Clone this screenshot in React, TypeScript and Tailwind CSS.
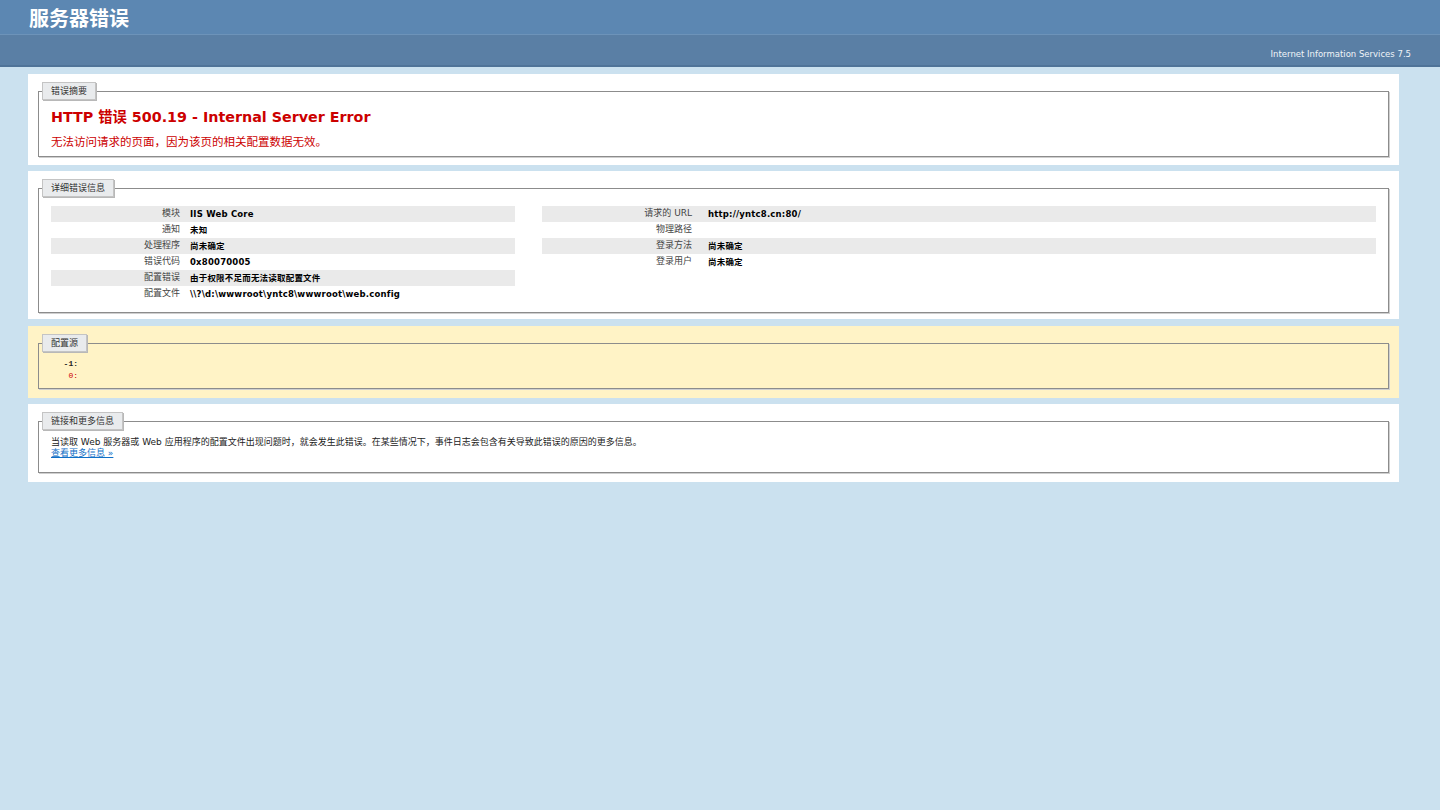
const FONT = '"DejaVu Sans", Verdana, "Noto Sans CJK SC", sans-serif';
const MONO = '"Liberation Mono", "DejaVu Sans Mono", monospace';

function Legend({ children }: { children: React.ReactNode }) {
  return (
    <legend className="ml-[2px] px-[8px] h-[18px] leading-[17px] text-[9px] text-[#333] bg-[#e9ebed] border border-[#c4c4c4] shadow-[1px_1px_0_#b8b8b8]">
      {children}
    </legend>
  );
}

function Box({
  title,
  children,
  className = "",
}: {
  title: string;
  children: React.ReactNode;
  className?: string;
}) {
  return (
    <fieldset
      className={`m-0 px-[1px] pt-0 min-w-0 border border-[#8c8c8c] shadow-[1px_1px_0_#cfcfcf] ${className}`}
    >
      <Legend>{title}</Legend>
      {children}
    </fieldset>
  );
}

const leftRows: [string, string][] = [
  ["模块", "IIS Web Core"],
  ["通知", "未知"],
  ["处理程序", "尚未确定"],
  ["错误代码", "0x80070005"],
  ["配置错误", "由于权限不足而无法读取配置文件"],
  ["配置文件", "\\\\?\\d:\\wwwroot\\yntc8\\wwwroot\\web.config"],
];

const rightRows: [string, string][] = [
  ["请求的 URL", "http://yntc8.cn:80/"],
  ["物理路径", ""],
  ["登录方法", "尚未确定"],
  ["登录用户", "尚未确定"],
];

function InfoTable({ rows, labelW }: { rows: [string, string][]; labelW: string }) {
  return (
    <div className="flex flex-col">
      {rows.map(([k, v], i) => (
        <div
          key={k}
          className={`flex h-[16px] items-center ${i % 2 === 0 ? "bg-[#eaeaea]" : ""}`}
        >
          <div className={`${labelW} shrink-0 text-right text-[9px] text-[#444]`}>{k}</div>
          <div className="text-[8.5px] font-bold text-black whitespace-nowrap tracking-[0.2px]">{v}</div>
        </div>
      ))}
    </div>
  );
}

export default function App() {
  return (
    <div className="min-h-screen bg-[#cbe1ef]" style={{ fontFamily: FONT }}>
      {/* Header */}
      <div className="h-[35px] bg-[#5c87b2] border-b border-[#6d93b9] flex items-center pl-[29px] pt-[3px]">
        <h1 className="text-white font-bold text-[20px] leading-none">服务器错误</h1>
      </div>
      <div className="h-[32px] bg-[#5a7fa5] border-b-2 border-[#4f7398] flex items-center justify-end pr-[29px] pt-[8px]">
        <span className="text-[8.5px] text-[#f0f4f8]">Internet Information Services 7.5</span>
      </div>

      <div className="pl-[28px] pr-[41px] pt-[7px] flex flex-col">
        {/* 错误摘要 */}
        <div className="bg-white px-[10px] pt-[8px] pb-[8px]">
          <Box title="错误摘要">
            <div className="pl-[11px] pt-[7px] pb-[6px]">
              <div className="text-[14.3px] leading-[20px] font-bold text-[#cc0000]">
                HTTP 错误 500.19 - Internal Server Error
              </div>
              <div className="mt-[7px] text-[11.5px] leading-[16px] text-[#cc0000]">
                无法访问请求的页面，因为该页的相关配置数据无效。
              </div>
            </div>
          </Box>
        </div>

        {/* 详细错误信息 */}
        <div className="mt-[6px] bg-white px-[10px] pt-[8px] pb-[6px]">
          <Box title="详细错误信息">
            <div className="flex gap-[27px] pl-[11px] pr-[11px] pt-[9px] pb-[10px]">
              <div className="w-[464px] shrink-0">
                <InfoTable rows={leftRows} labelW="w-[129px] mr-[10px]" />
              </div>
              <div className="flex-1">
                <InfoTable rows={rightRows} labelW="w-[150px] mr-[16px]" />
              </div>
            </div>
          </Box>
        </div>

        {/* 配置源 */}
        <div className="mt-[7px] bg-[#fff3c6] px-[10px] pt-[8px] pb-[9px]">
          <Box title="配置源">
            <div className="pl-[11px] pt-[6px] pb-[6px] text-[8px] leading-[12px] font-bold" style={{ fontFamily: MONO }}>
              <div className="flex">
                <span className="w-[27px] text-right text-[#222]">-1:</span>
              </div>
              <div className="flex">
                <span className="w-[27px] text-right text-[#cc0000] font-normal">0:</span>
              </div>
            </div>
          </Box>
        </div>

        {/* 链接和更多信息 */}
        <div className="mt-[6px] bg-white px-[10px] pt-[8px] pb-[9px]">
          <Box title="链接和更多信息">
            <div className="pl-[11px] pt-[7px] pb-[13px] text-[9px] leading-[11px] text-[#222]">
              <div>
                当读取 Web 服务器或 Web 应用程序的配置文件出现问题时，就会发生此错误。在某些情况下，事件日志会包含有关导致此错误的原因的更多信息。
              </div>
              <a href="#" className="text-[#0f6fc6] underline">
                查看更多信息 »
              </a>
            </div>
          </Box>
        </div>
      </div>
    </div>
  );
}
